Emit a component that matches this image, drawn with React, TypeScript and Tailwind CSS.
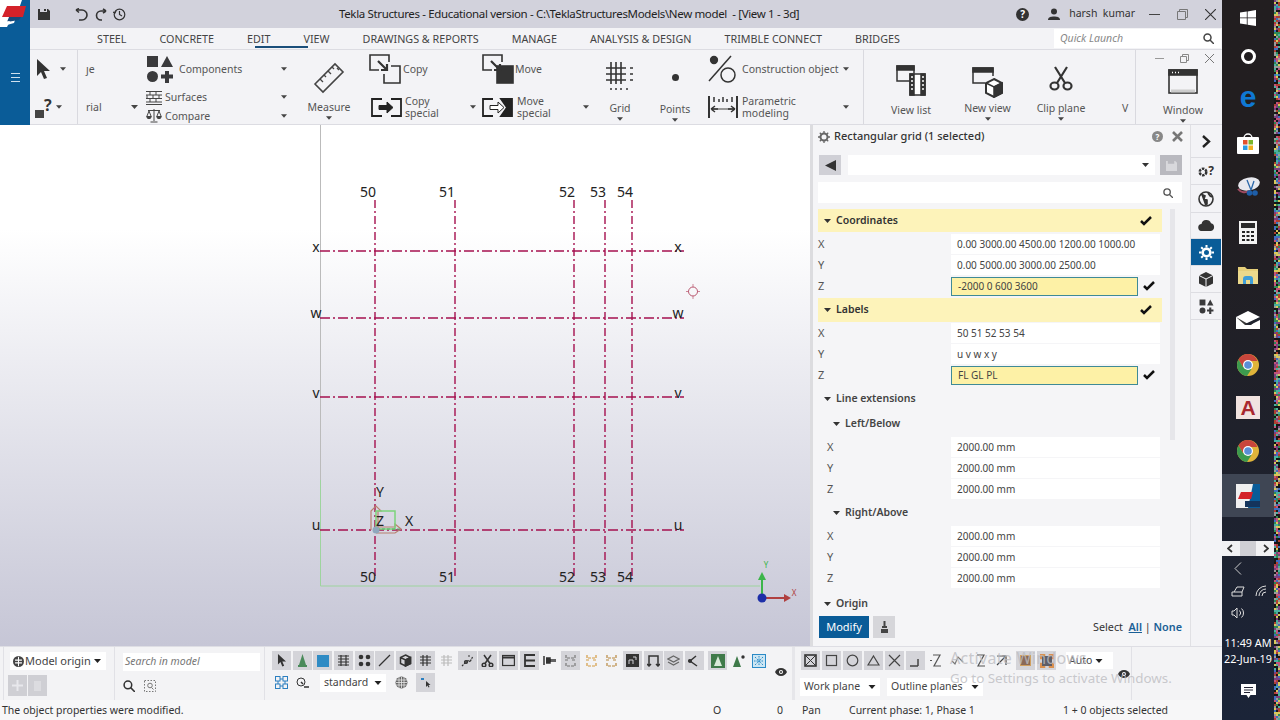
import React from "react";

const ink = "#3a3a3c";
const Caret = ({ c = "#444", w = 7 }: { c?: string; w?: number }) => (
  <svg width={w} height={4} viewBox="0 0 7 4" className="shrink-0"><path d="M0 0h7L3.5 4z" fill={c} /></svg>
);

function Components({ s = 28 }: { s?: number }) {
  return (
    <svg width={s} height={s} viewBox="0 0 28 28" fill={ink}>
      <rect x="1" y="1" width="11" height="11" />
      <path d="M15 12 21 1l6 11z" />
      <circle cx="6.5" cy="21.5" r="5.5" />
      <path d="M19 16h4v3.500h4v4h-4V28h-4v-4.500h-4v-4h4z" />
    </svg>
  );
}
const Surfaces = () => (
  <svg width="16" height="15" viewBox="0 0 16 15" stroke="#444" fill="none" strokeWidth="1">
    <path d="M0 1.500h16M0 5h16M0 8.500h16M0 12h16M0 14.500h16M4 1.500V5M10 1.500V5M1 5v3.500M7 5v3.500M13 5v3.500M4 8.500V12M10 8.500V12" />
  </svg>
);
const Compare = () => (
  <svg width="16" height="15" viewBox="0 0 16 15" stroke="#444" fill="none" strokeWidth="1">
    <path d="M8 1v12M2 2.500h12M3 3 .8 8.500h4.400zM13 3l-2.200 5.500h4.400zM4.500 14h7" />
    <path d="M.8 8.500a2.200 2.200 0 0 0 4.400 0zM10.800 8.500a2.200 2.200 0 0 0 4.400 0z" fill="#444" />
  </svg>
);
const Ruler = () => (
  <svg width="32" height="32" viewBox="0 0 32 32" fill="none" stroke="#444" strokeWidth="1.600">
    <path d="M2 22 22 2l8 8-20 20z" />
    <path d="M7 17l3 3M11 13l2 2M15 9l3 3M19 5l2 2M24 6l2 2" strokeWidth="1.300" />
  </svg>
);
const CopyIcon = ({ filled }: { filled?: boolean }) => (
  <svg width="32" height="30" viewBox="0 0 32 30" fill="none" stroke="#333" strokeWidth="1.600">
    <path d="M20 8V1H1v15h9" />
    {filled ? <rect x="15" y="12" width="16" height="17" fill="#333" /> : <path d="M22 12h9v17H15v-9" />}
    <path d="M9 7l9 9M18 10v6h-6" strokeWidth="2.200" stroke="#333" />
  </svg>
);
const SpecialIcon = ({ filled }: { filled?: boolean }) => (
  <svg width="31" height="19" viewBox="0 0 31 19" fill="none" stroke="#222" strokeWidth="1.800">
    <path d="M11 1H1v17h10" />
    {filled ? <path d="M19 1h11v17H19l6-8.500z" fill="#222" /> : <path d="M20 1h10v17H20" />}
    <path d="M8 7.500h8V4l6 5.500-6 5.500v-3.500H8z" fill={filled ? "#fff" : "#222"} strokeWidth="1" />
  </svg>
);
const GridIcon = () => (
  <svg width="28" height="28" viewBox="0 0 28 28" stroke="#333" fill="none" strokeWidth="1.600">
    <path d="M0 6h20M0 12h20M0 18h20M5 0v22M10 0v22M15 0v22" />
    <path d="M24 6h3M24 12h3M24 18h3M5 26v2M10 26v2M15 26v2M21 26v2" strokeWidth="1.500" />
  </svg>
);
const Construction = () => (
  <svg width="30" height="28" viewBox="0 0 30 28" fill="none" stroke="#333" strokeWidth="1.500">
    <circle cx="6" cy="5" r="3.400" fill="#333" />
    <circle cx="20" cy="20" r="7" />
    <path d="M1 26 23 1" />
  </svg>
);
const Parametric = () => (
  <svg width="30" height="24" viewBox="0 0 30 24" fill="none" stroke="#333" strokeWidth="1.500">
    <path d="M1 1v22M29 1v22" strokeWidth="2" />
    <path d="M6 2v5M11 4v3M15 2v5M19 4v3M24 2v5" />
    <path d="M4 14h22" stroke="#999" strokeWidth="2" />
    <path d="M3 14h7M20 14h7M3 14l4-3M3 14l4 3M27 14l-4-3M27 14l-4 3" />
  </svg>
);
const WinGlyph = ({ w = 30, h = 25 }: { w?: number; h?: number }) => (
  <svg width={w} height={h} viewBox="0 0 30 25" fill="none" stroke="#333" strokeWidth="1.600">
    <rect x="1" y="1" width="28" height="23" />
    <rect x="1" y="1" width="28" height="5" fill="#333" />
    <path d="M4 3.500h1M7 3.500h1M10 3.500h1" stroke="#fff" />
    <path d="M3 22h24" stroke="#ccc" strokeWidth="3" />
  </svg>
);
const ViewList = () => (
  <svg width="30" height="31" viewBox="0 0 30 31" fill="none" stroke="#333" strokeWidth="1.500">
    <path d="M17 16H1V1h17v7" />
    <rect x="1" y="1" width="17" height="4" fill="#333" />
    <rect x="14" y="9" width="15" height="21" fill="#fff" />
    <rect x="14" y="9" width="4" height="21" fill="#333" />
    <rect x="25" y="9" width="4" height="21" fill="#333" />
    <path d="M15 12h2M15 16h2M15 20h2M15 24h2M26 12h2M26 16h2M26 20h2M26 24h2" stroke="#fff" />
  </svg>
);
const NewView = () => (
  <svg width="31" height="31" viewBox="0 0 31 31" fill="none" stroke="#333" strokeWidth="1.500">
    <path d="M13 16H1V1h20v8" />
    <rect x="1" y="1" width="20" height="4" fill="#333" />
    <path d="M22 12l8 4v10l-8 4-8-4V16z" fill="#fff" strokeWidth="2" />
    <path d="M14 16l8 4 8-4" strokeWidth="1.500" />
    <path d="M22 20v10l8-4V16z" fill="#333" />
  </svg>
);
const Scissors = () => (
  <svg width="24" height="25" viewBox="0 0 24 25" fill="none" stroke="#333" strokeWidth="2.200">
    <ellipse cx="5.500" cy="20" rx="4" ry="3.500" />
    <ellipse cx="18.500" cy="20" rx="4" ry="3.500" />
    <path d="M8 17 18 1M16 17 6 1" />
  </svg>
);

const RibbonLabel = ({ children }: { children: React.ReactNode }) => <span className="block text-[#555] text-[10.5px] leading-[12px] whitespace-nowrap">{children}</span>;

function Ribbon() {
  return (
    <div className="flex h-[75px] border-b border-[#dcdce2] bg-[#f3f3f6]">
      <div className="w-[48px] border-r border-[#d9d9df] shrink-0">
        <div className="h-[38px] flex items-center pl-[6px] gap-[9px]">
          <svg width="15" height="21" viewBox="0 0 15 21"><path d="M1 0v17l4-4 3 7 3-1-3-7h6z" fill="#333" /></svg>
          <Caret w={6} />
        </div>
        <div className="h-[38px] flex items-center pl-[5px] gap-[1px]">
          <div className="flex items-end">
            <span className="w-[9px] h-[8px] bg-[#444] mb-[1px]" />
            <span className="text-[#333] text-[16px] font-bold leading-[18px] mb-[5px]">?</span>
          </div>
          <span className="ml-[3px]"><Caret w={6} /></span>
        </div>
      </div>
      <div className="w-[62px] shrink-0 pl-[8px]">
        <div className="h-[38px] flex items-center"><RibbonLabel>ȷe</RibbonLabel></div>
        <div className="h-[38px] flex items-center justify-between pr-[2px]"><RibbonLabel>rial</RibbonLabel><Caret /></div>
      </div>
      <div className="w-[155px] shrink-0 pl-[6px] pr-[8px]">
        <div className="h-[38px] flex items-center justify-between">
          <div className="flex items-center gap-[5px] mt-[-1px]"><Components /><RibbonLabel>Components</RibbonLabel></div><Caret w={6} />
        </div>
        <div className="h-[18.500px] flex items-center justify-between"><div className="flex items-center gap-[3px]"><Surfaces /><RibbonLabel>Surfaces</RibbonLabel></div><Caret w={6} /></div>
        <div className="h-[18.500px] flex items-center justify-between"><div className="flex items-center gap-[3px]"><Compare /><RibbonLabel>Compare</RibbonLabel></div><Caret w={6} /></div>
      </div>
      <div className="w-[65px] shrink-0 flex flex-col items-center pl-[3px]">
        <div className="h-[44px] flex items-end"><Ruler /></div>
        <div className="mt-[7px]"><RibbonLabel>Measure</RibbonLabel></div>
        <div className="mt-[3px]"><Caret w={6} /></div>
      </div>
      <div className="w-[120px] shrink-0 pl-[9px]">
        <div className="h-[38px] flex items-center gap-[2px]"><CopyIcon /><RibbonLabel>Copy</RibbonLabel></div>
        <div className="h-[38px] flex items-center">
          <span className="ml-[2px]"><SpecialIcon /></span>
          <span className="ml-[3px] w-[65px] flex"><RibbonLabel>Copy<br />special</RibbonLabel></span>
          <Caret w={6} />
        </div>
      </div>
      <div className="w-[115px] shrink-0 pl-[2px]">
        <div className="h-[38px] flex items-center gap-[1px]"><CopyIcon filled /><RibbonLabel>Move</RibbonLabel></div>
        <div className="h-[38px] flex items-center">
          <SpecialIcon filled />
          <span className="ml-[4px] w-[66px] flex"><RibbonLabel>Move<br />special</RibbonLabel></span>
          <Caret w={6} />
        </div>
      </div>
      <div className="w-[53px] shrink-0 flex flex-col items-center pr-[3px]">
        <div className="h-[40px] flex items-end"><GridIcon /></div>
        <div className="mt-[12px]"><RibbonLabel>Grid</RibbonLabel></div>
        <div className="mt-[3px]"><Caret w={6} /></div>
      </div>
      <div className="w-[52px] shrink-0 flex flex-col items-center pl-[2px]">
        <div className="h-[31px] flex items-end"><span className="w-[7px] h-[7px] rounded-full bg-[#333]" /></div>
        <div className="mt-[22px]"><RibbonLabel>Points</RibbonLabel></div>
        <div className="mt-[3px]"><Caret w={6} /></div>
      </div>
      <div className="w-[164px] shrink-0 pl-[8px] pr-[14px] border-r border-[#d9d9df]">
        <div className="h-[38px] flex items-center justify-between">
          <div className="flex items-center gap-[4px]"><Construction /><RibbonLabel>Construction object</RibbonLabel></div><Caret w={6} />
        </div>
        <div className="h-[38px] flex items-center justify-between">
          <div className="flex items-center gap-[4px]"><Parametric /><RibbonLabel>Parametric<br />modeling</RibbonLabel></div><Caret w={6} />
        </div>
      </div>
      <div className="w-[272px] shrink-0 flex border-r border-[#d9d9df]">
        <div className="w-[90px] flex flex-col items-center pl-[4px]">
          <div className="h-[46px] flex items-end"><ViewList /></div>
          <div className="mt-[8px]"><RibbonLabel>View list</RibbonLabel></div>
        </div>
        <div className="w-[75px] flex flex-col items-center pr-[8px]">
          <div className="h-[48px] flex items-end"><NewView /></div>
          <div className="mt-[4px]"><RibbonLabel>New view</RibbonLabel></div>
          <div className="mt-[3px]"><Caret w={6} /></div>
        </div>
        <div className="w-[72px] flex flex-col items-center pr-[8px]">
          <div className="h-[41px] flex items-end"><Scissors /></div>
          <div className="mt-[11px]"><RibbonLabel>Clip plane</RibbonLabel></div>
          <div className="mt-[3px]"><Caret w={6} /></div>
        </div>
        <div className="pt-[52px] pl-[21px]"><RibbonLabel>V</RibbonLabel></div>
      </div>
      <div className="w-[85px] shrink-0 flex flex-col">
        <div className="h-[15px] flex items-center justify-end gap-[16px] pr-[7px] pt-[2px]">
          <span className="w-[9px] h-px bg-[#999]" />
          <svg width="9" height="9" viewBox="0 0 9 9" fill="none" stroke="#888"><path d="M.5 2.500h6v6h-6zM2.500 2.500v-2h6v6h-2" /></svg>
          <svg width="9" height="9" viewBox="0 0 9 9" stroke="#777"><path d="M0 0l9 9M9 0 0 9" /></svg>
        </div>
        <div className="flex flex-col items-center pl-[9px] mt-[4px]">
          <WinGlyph />
          <div className="mt-[10px]"><RibbonLabel>Window</RibbonLabel></div>
          <div className="mt-[3px]"><Caret w={6} /></div>
        </div>
      </div>
    </div>
  );
}

function TitleBar() {
  return (
    <div className="h-[28px] bg-[#d2d2dc] flex items-center relative">
      <svg className="ml-[8px]" width="12" height="12" viewBox="0 0 12 12"><path d="M0 1h2v3h7V1h1l2 2v9H0z" fill="#333" /><rect x="6" y="1" width="2" height="2" fill="#333" /></svg>
      <svg className="ml-[25px]" width="13" height="13" viewBox="0 0 13 13" fill="none" stroke="#333" strokeWidth="1.600"><path d="M1 2h6a4.500 4.500 0 0 1 0 10H4" /><path d="M1 2l3-1.500M1 2l3 2.500" /></svg>
      <svg className="ml-[6px]" width="13" height="13" viewBox="0 0 13 13" fill="none" stroke="#333" strokeWidth="1.600"><path d="M12 3H7a4.500 4.500 0 0 0 0 9h1" /><path d="M12 3 9 .8M12 3 9 5" /></svg>
      <svg className="ml-[6px]" width="13" height="13" viewBox="0 0 13 13" fill="none" stroke="#333" strokeWidth="1.200"><circle cx="6.500" cy="6.500" r="5.300" /><path d="M6.500 3v3.500l2.500 1.500" /><path d="M0 4l2 1 1-2" /></svg>
      <span className="ml-[213px] text-[11.500px] tracking-[-0.35px] text-[#222] whitespace-pre w-[470px]">Tekla Structures - Educational version - C:\TeklaStructuresModels\New model  - [View 1 - 3d]</span>
      <div className="ml-auto flex items-center pr-[6px]">
        <span className="w-[13px] h-[13px] rounded-full bg-[#333] text-white text-[10px] font-bold leading-[13px] text-center">?</span>
        <svg className="ml-[19px]" width="12" height="12" viewBox="0 0 12 12" fill="#333"><circle cx="6" cy="3.500" r="3" /><path d="M0 12c0-3 3-3.500 6-3.500s6 .5 6 3.500z" /></svg>
        <span className="ml-[9px] text-[10.500px] text-[#333] whitespace-pre">harsh  kumar</span>
        <span className="ml-[14px] w-[11px] h-px bg-[#444]" />
        <svg className="ml-[17px]" width="11" height="11" viewBox="0 0 11 11" fill="none" stroke="#777"><path d="M.5 2.500h8v8h-8zM2.500 2.500v-2h8v8h-2" /></svg>
        <svg className="ml-[17px]" width="11" height="11" viewBox="0 0 11 11" stroke="#333" strokeWidth="1.100"><path d="M0 0l11 11M11 0 0 11" /></svg>
      </div>
    </div>
  );
}

function Tabs() {
  const tabs = ["STEEL", "CONCRETE", "EDIT", "VIEW", "DRAWINGS & REPORTS", "MANAGE", "ANALYSIS & DESIGN", "TRIMBLE CONNECT", "BRIDGES"];
  return (
    <div className="h-[22px] bg-[#f3f3f6] flex items-center border-b border-[#dcdce2] pl-[67px] relative">
      <div className="flex gap-[33px] text-[10.750px] pt-[1px] text-[#444] whitespace-nowrap">
        {tabs.map((t) => <span key={t}>{t}</span>)}
      </div>
      <span className="absolute left-[225px] bottom-[1px] w-[53px] h-[2px] bg-[#1a4e7a]" />
      <div className="ml-auto mr-[1px] w-[167px] h-[19px] bg-white flex items-center justify-between pl-[6px] pr-[7px]">
        <span className="italic text-[10.500px] text-[#888]">Quick Launch</span>
        <svg width="11" height="11" viewBox="0 0 11 11" fill="none" stroke="#444" strokeWidth="1.500"><circle cx="4.500" cy="4.500" r="3.500" /><path d="M7 7l4 4" /></svg>
      </div>
    </div>
  );
}

function Viewport() {
  const vx: [number, string, number][] = [[375, "50", 368], [455, "51", 447], [574, "52", 567], [605, "53", 598], [632, "54", 625]];
  const hy: [number, string, number][] = [[251, "x", 247], [318, "w", 313], [397, "v", 393], [530, "u", 525]];
  return (
    <div className="w-[810px] h-full shrink-0 bg-gradient-to-b from-white from-[20%] to-[#c6c6d6]">
      <svg width="810" height="521" viewBox="0 125 810 521" fontFamily="'Noto Sans', sans-serif">
        <path d="M320.500 125v355" stroke="#bbb" />
        <path d="M320.500 480v106H760" stroke="#9ed49e" fill="none" />
        {vx.map(([x]) => <path key={x} d={`M${x} 200V578`} stroke="#a5104f" strokeWidth="1.400" strokeDasharray="8 3 2 3" />)}
        {hy.map(([y]) => <path key={y} d={`M320 ${y}H684`} stroke="#a5104f" strokeWidth="1.400" strokeDasharray="10 3 2 3" />)}
        {vx.map(([, l, x]) => (
          <g key={l} fontSize="14" fill="#222" textAnchor="middle">
            <text x={x} y="197">{l}</text>
            <text x={x} y="582">{l}</text>
          </g>
        ))}
        {hy.map(([, l, y]) => (
          <g key={l} fontSize="14" fill="#222" textAnchor="middle">
            <text x="316" y={y + 5}>{l}</text>
            <text x="678" y={y + 5}>{l}</text>
          </g>
        ))}
        <g fill="none" strokeWidth="1.200">
          <path d="M371 530v-19l5-5 5 5h-3v19" stroke="#b8806e" />
          <path d="M376 533h19l6-4-6-5v3h-19" stroke="#b8806e" />
          <rect x="376" y="511" width="19" height="18" stroke="#7bd47b" strokeWidth="1.500" />
          <path d="M377 529h24" stroke="#59b36a" strokeDasharray="3 2" />
          <circle cx="376" cy="530" r="3.500" fill="#8fa7bd" stroke="none" />
        </g>
        <g fill="#222" fontSize="14" textAnchor="middle">
          <text x="380" y="497">Y</text>
          <text x="409" y="526">X</text>
          <text x="380" y="526">Z</text>
        </g>
        <circle cx="693" cy="291.500" r="4.500" fill="none" stroke="#b9566e" />
        <path d="M693 284v3M693 296v3M686 291.500h3M697 291.500h3" stroke="#b9566e" strokeWidth=".7" />
        <path d="M762 598V576" stroke="#3cb54a" strokeWidth="2" />
        <path d="M758 580l4-8 4 8z" fill="#3cb54a" />
        <path d="M762 598H786" stroke="#b04040" strokeWidth="2" />
        <path d="M784 594l7 4-7 4z" fill="#b04040" />
        <circle cx="762" cy="598" r="4.500" fill="#1d2fa8" />
        <text x="766" y="568" fontSize="8" fill="#3cb54a" textAnchor="middle">Y</text>
        <text x="794" y="596" fontSize="8" fill="#b04040" textAnchor="middle">X</text>
      </svg>
    </div>
  );
}

const Check = () => (
  <svg width="12" height="10" viewBox="0 0 12 10" fill="none" stroke="#111" strokeWidth="2.500"><path d="M1 5l3 3 7-7" /></svg>
);
const Field = ({ label, value, edit, near }: { label: string; value: string; edit?: boolean; near?: boolean }) => (
  <div className="h-[20px] flex items-center mt-[1px] text-[10px]">
    <span className={`w-[133px] text-[#555] text-[11px] ${near ? "pl-[0px]" : "pl-[9px]"}`}>{label}</span>
    {edit ? (
      <>
        <div className="w-[187px] h-[19px] bg-[#fdf1a6] border border-[#3f8a96] flex items-center pl-[6px] text-[#444]">{value}</div>
        <span className="ml-[5px]"><Check /></span>
      </>
    ) : (
      <div className="w-[209px] h-[20px] bg-white flex items-center pl-[6px] text-[#444]">{value}</div>
    )}
  </div>
);
const Section = ({ label, cls }: { label: string; cls: string }) => (
  <div className={`h-[23px] bg-[#fdf3ba] flex items-center pl-[5px] pr-[10px] text-[#333] text-[10.500px] font-semibold ${cls}`}>
    <Caret w={9} c="#333" />
    <span className="ml-[4px]">{label}</span>
    <span className="ml-auto"><Check /></span>
  </div>
);
const Sub = ({ label, cls, indent }: { label: string; cls: string; indent?: boolean }) => (
  <div className={`h-[20px] flex items-center text-[10.500px] font-semibold text-[#444] ${indent ? "pl-[14px]" : "pl-[5px]"} ${cls}`}>
    <Caret w={9} c="#333" />
    <span className="ml-[4px]">{label}</span>
  </div>
);

function Panel() {
  return (
    <div className="w-[380px] shrink-0 h-full bg-[#f5f5f7] border-l-[3px] border-[#dcdcdf] pl-[5px] flex flex-col">
      <div className="h-[23px] flex items-center pr-[7px]">
        <svg width="12" height="12" viewBox="0 0 12 12" fill="none" stroke="#666" strokeWidth="2"><circle cx="6" cy="6" r="3.500" /><path d="M6 0v2M6 10v2M0 6h2M10 6h2M1.800 1.800l1.400 1.400M8.800 8.800l1.400 1.400M1.800 10.200l1.400-1.400M8.800 3.200l1.400-1.400" strokeWidth="1.300" /></svg>
        <span className="ml-[4px] text-[11px] font-medium text-[#333]">Rectangular grid (1 selected)</span>
        <span className="ml-auto w-[11px] h-[11px] rounded-full bg-[#888] text-white text-[8px] font-bold text-center leading-[11px]">?</span>
        <svg className="ml-[9px]" width="11" height="11" viewBox="0 0 11 11" stroke="#777" strokeWidth="2.600"><path d="M1 1l9 9M10 1 1 10" /></svg>
      </div>
      <div className="mt-[7px] h-[20px] flex pr-[7px]">
        <div className="ml-[1px] w-[22px] bg-[#d0d0d6] flex items-center justify-center">
          <svg width="11" height="11" viewBox="0 0 11 11"><path d="M11 0v11L0 5.500z" fill="#333" /></svg>
        </div>
        <div className="ml-[7px] w-[307px] bg-white flex items-center justify-end pr-[5px]"><Caret w={9} c="#333" /></div>
        <div className="ml-[5px] w-[22px] bg-[#b9b9bf] flex items-center justify-center">
          <svg width="11" height="11" viewBox="0 0 12 12"><path d="M0 1h2v3h7V1h1l2 2v9H0z" fill="#d8d8dc" /></svg>
        </div>
      </div>
      <div className="mt-[7px] h-[21px] w-[364px] bg-white flex items-center justify-end pr-[9px]">
        <svg width="10" height="10" viewBox="0 0 11 11" fill="none" stroke="#555" strokeWidth="1.500"><circle cx="4.500" cy="4.500" r="3.500" /><path d="M7 7l4 4" /></svg>
      </div>
      <div className="flex flex-1 min-h-0">
        <div className="w-[344px] shrink-0">
          <Section label="Coordinates" cls="mt-[6px]" />
          <div className="mt-[2px]">
            <Field near label="X" value="0.00 3000.00 4500.00 1200.00 1000.00" />
            <Field near label="Y" value="0.00 5000.00 3000.00 2500.00" />
            <Field near label="Z" value="-2000 0 600 3600" edit />
          </div>
          <Section label="Labels" cls="mt-[2px] h-[24px]" />
          <div className="mt-[1px]">
            <Field near label="X" value="50 51 52 53 54" />
            <Field near label="Y" value="u v w x y" />
            <Field near label="Z" value="FL GL PL" edit />
          </div>
          <Sub label="Line extensions" cls="mt-[4px]" />
          <Sub label="Left/Below" cls="mt-[5px]" indent />
          <div className="mt-[3px]">
            <Field label="X" value="2000.00 mm" />
            <Field label="Y" value="2000.00 mm" />
            <Field label="Z" value="2000.00 mm" />
          </div>
          <Sub label="Right/Above" cls="mt-[4px]" indent />
          <div className="mt-[3px]">
            <Field label="X" value="2000.00 mm" />
            <Field label="Y" value="2000.00 mm" />
            <Field label="Z" value="2000.00 mm" />
          </div>
          <Sub label="Origin" cls="mt-[6px]" />
          <div className="mt-[2px] flex items-center h-[22px] w-[364px]">
            <button className="ml-[1px] w-[50px] h-[22px] bg-[#0a5c98] text-white text-[11px]">Modify</button>
            <span className="ml-[4px] w-[22px] h-[22px] bg-[#d6d6da] flex items-center justify-center">
              <svg width="7" height="12" viewBox="0 0 7 12" fill="#444"><rect x="2.500" y="0" width="2" height="5" /><path d="M1 5h5v2H1zM0 8h7v4H0z" /></svg>
            </span>
            <span className="ml-auto text-[10.800px] text-[#333] whitespace-pre">Select  <span className="text-[#1a5f96] underline font-semibold">All</span> | <span className="text-[#1a5f96] font-semibold">None</span></span>
          </div>
        </div>
        <div className="ml-[8px] mt-[6px] w-[5px] h-[231px] bg-[#e6e6ea]" />
      </div>
    </div>
  );
}

function SideIcons() {
  const items: [React.ReactNode, boolean, string][] = [
    [<svg width="9" height="13" viewBox="0 0 9 13" fill="none" stroke="#222" strokeWidth="2.400"><path d="M1 1l6 5.500L1 12" /></svg>, false, "h-[33px]"],
    [<div className="flex items-end"><svg className="mb-[2px]" width="10" height="10" viewBox="0 0 10 10" fill="none" stroke="#333"><circle cx="5" cy="5" r="3.300" strokeWidth="2.500" strokeDasharray="2.500 1" /></svg><span className="text-[12px] leading-[16px] font-bold text-[#333]">?</span></div>, false, "h-[27px]"],
    [<svg width="16" height="16" viewBox="0 0 16 16" fill="none" stroke="#333" strokeWidth="1.600"><circle cx="8" cy="8" r="7" /><path d="M3 3l4 2-1 3 3 1 0 4-2 1M10 2l2 3 2 1" fill="#333" /></svg>, false, "h-[28px]"],
    [<svg width="17" height="11" viewBox="0 0 17 11" fill="#333"><path d="M4 11a3.500 3.500 0 0 1-.5-7A5 5 0 0 1 13 3.200 4 4 0 0 1 13 11z" /></svg>, false, "h-[26px]"],
    [<svg width="15" height="15" viewBox="0 0 15 15" fill="none" stroke="#fff" strokeWidth="2.600"><circle cx="7.500" cy="7.500" r="3.800" /><path d="M7.500 0v2.500M7.500 12.500V15M0 7.500h2.500M12.500 7.500H15M2.200 2.200 4 4M11 11l1.800 1.800M2.200 12.800 4 11M11 4l1.800-1.800" strokeWidth="2" /></svg>, true, "h-[27px]"],
    [<svg width="14" height="15" viewBox="0 0 14 15"><path d="M7 0l7 3.500v8L7 15 0 11.500v-8z" fill="#333" /><path d="M0 3.500 7 7l7-3.500M7 7v8" stroke="#f3f3f6" fill="none" /></svg>, false, "h-[27px]"],
    [<Components s={15} />, false, "h-[27px]"],
  ];
  return (
    <div className="w-[32px] shrink-0 h-full bg-[#f3f3f6] border-l border-[#e0e0e4] flex flex-col">
      {items.map(([icon, active, h], i) => (
        <div key={i} className={`${h} w-[30px] flex items-center justify-center border-b border-[#dddde2] ${active ? "bg-[#0a5c98]" : ""}`}>{icon}</div>
      ))}
    </div>
  );
}

const G = ({ children, s = "#333", f = "none", sw = 1.2 }: { children: React.ReactNode; s?: string; f?: string; sw?: number }) => (
  <svg width="13" height="13" viewBox="0 0 13 13" fill={f} stroke={s} strokeWidth={sw}>{children}</svg>
);
const Tile = ({ on = true, children, cls = "" }: { on?: boolean; children: React.ReactNode; cls?: string }) => (
  <div className={`w-[19px] h-[19px] flex items-center justify-center shrink-0 ${on ? "bg-[#d4d4d9]" : ""} ${cls}`}>{children}</div>
);
const Dropdown = ({ label, cls }: { label: string; cls: string }) => (
  <div className={`h-[18px] bg-white flex items-center justify-between px-[4px] text-[10.500px] text-[#444] ${cls}`}>
    <span>{label}</span><Caret w={8} c="#222" />
  </div>
);
const Eye = () => (
  <svg width="12" height="8" viewBox="0 0 12 8" fill="#333"><path d="M6 0c3 0 5 2 6 4-1 2-3 4-6 4S1 6 0 4c1-2 3-4 6-4z" /><circle cx="6" cy="4" r="2" fill="#fff" /><circle cx="6" cy="4" r="1" /></svg>
);
const hatch = <path d="M1 3h11M1 6h11M1 9h11M4 1v11M8 1v11" />;

function Toolbar() {
  const row1: [React.ReactNode, boolean, string?][] = [
    [<svg width="10" height="13" viewBox="0 0 15 21"><path d="M1 0v17l4-4 3 7 3-1-3-7h6z" fill="#333" /></svg>, true],
    [<svg width="9" height="13" viewBox="0 0 9 13" fill="#4a8a5a"><path d="M4.500 0 8 11H1z" /><rect x="0" y="11" width="9" height="2" /></svg>, true],
    [<span className="w-[12px] h-[12px] bg-[#2f8bc4] block" />, true],
    [<G><path d="M1 2h11M1 5h11M1 8h11M1 11h11M4 1v11M9 1v11" /></G>, true],
    [<G f="#333" s="none"><circle cx="3" cy="3" r="2.300" /><circle cx="10" cy="3" r="2.300" /><circle cx="3" cy="10" r="2.300" /><circle cx="10" cy="10" r="2.300" /></G>, true],
    [<G><path d="M1 12 12 1" /></G>, true],
    [<G sw={1.500}><path d="M6.500 1l5 2.500v6l-5 2.500-5-2.500v-6zM1.500 3.500l5 2.500 5-2.500M6.500 6v6" /><path d="M6.500 6v6l5-2.500v-6z" fill="#333" /></G>, true],
    [<G>{hatch}</G>, true],
    [<G s="#bbb">{hatch}</G>, false],
    [<G><path d="M1 12 7 6l2 2 3-6M7 2h3" strokeDasharray="2 1" /><circle cx="5" cy="8" r="1.500" fill="#555" /></G>, true],
    [<G sw={1.500}><circle cx="3" cy="11" r="1.800" /><circle cx="10" cy="11" r="1.800" /><path d="M4 9.500 10 1M9 9.500 3 1" /></G>, true],
    [<G><rect x=".6" y="1.500" width="11.800" height="10" /><path d="M1 3.500h11" strokeWidth="2" /></G>, true],
    [<G sw={1.800}><path d="M2 0v13M12 1H2M12 6.500H2M12 12H2" /></G>, true],
    [<G sw={1.500}><path d="M1 2v9M3 4h4v5H3M8 5v3M10 5v3M12 5v3" fill="#333" /></G>, false],
    [<G s="#777"><path d="M2 1v3h9V1M1 6h4M8 6h4M2 9v3h9V9" strokeDasharray="3 1" /></G>, true],
    [<G s="#d49b42"><path d="M2 1v3h9V1M1 6h4M8 6h4M2 9v3h9V9" strokeDasharray="3 1" /></G>, false],
    [<G s="#b8873e"><path d="M2 1v3h9V1M1 6h4M8 6h4M2 9v3h9V9" strokeDasharray="3 1" /></G>, false],
    [<svg width="13" height="13" viewBox="0 0 13 13" fill="#333"><path d="M0 0h13v13H0z" /><path d="M3 10V6h4v4M7 3h3v3" stroke="#d4d4d9" fill="none" /></svg>, true],
    [<G sw={1.500}><path d="M2 12V2h9v10M0 10l2 2 2-2M9 10l2 2 2-2" /></G>, true],
    [<G s="#666"><path d="M6.500 2 12 5 6.500 8 1 5zM1 8l5.500 3L12 8" /></G>, true],
    [<G sw={1.500}><path d="M2 7l6-5M2 7l7 5" /><circle cx="2" cy="7" r="1.300" fill="#333" /></G>, true],
    [<svg width="14" height="14" viewBox="0 0 14 14"><rect width="14" height="14" fill="#3f7a4a" /><path d="M7 2 11 12H3z" fill="#d9ead9" /></svg>, true, "ml-[3px]"],
    [<svg width="14" height="14" viewBox="0 0 14 14" fill="#3f7a4a"><path d="M5 2 9 13H1z" /><circle cx="11" cy="3" r="1.700" fill="#333" /></svg>, false],
    [<svg width="14" height="14" viewBox="0 0 14 14" fill="none" stroke="#2b8ac6"><rect x=".5" y=".5" width="13" height="13" fill="#cde6f3" /><path d="M3 3l8 8M11 3l-8 8M7 2v10M2 7h10" strokeDasharray="1.500 1" /></svg>, false],
  ];
  const right: [React.ReactNode, boolean, string?][] = [
    [<G sw={1.600}><rect x="1" y="1" width="11" height="11" /><path d="M1 1l11 11M12 1 1 12" strokeWidth="1" /></G>, true],
    [<G s="#444"><rect x="1.500" y="1.500" width="10" height="10" /></G>, true],
    [<G s="#444"><circle cx="6.500" cy="6.500" r="5.300" /></G>, true],
    [<G s="#444"><path d="M6.500 2 12 11H1z" /></G>, true],
    [<G s="#444"><path d="M1 1l11 11M12 1 1 12" /></G>, true],
    [<G s="#444" sw={1.500}><path d="M1 12h8M9 12V5" /></G>, true],
    [<G s="#555"><path d="M3 1h7L4 12h7M0 6.500h2" /></G>, false],
    [<G s="#777"><path d="M1 7l3 3 3-7 5 5" /></G>, false],
    [<G s="#555"><path d="M3 1h7L4 12h7" /></G>, false, "ml-[2px]"],
    [<G s="#444"><path d="M2 2h9v9M11 2 2 11" /></G>, false],
    [<span className="w-[11px] h-[11px] bg-[#8a6a58] border border-[#d0a060] block" />, true, "ml-[3px]"],
    [<span className="w-[10px] h-[10px] bg-[#5e5e68] outline-2 outline-dashed outline-[#d99050] block" />, true],
  ];
  return (
    <div className="h-[54px] bg-[#f3f3f5] border-t border-[#dedee4] flex relative">
      <div className="w-[112px] ml-[3px] shrink-0 border-l border-r border-[#e1e1e6] pl-[6px] pt-[5px]">
        <div className="w-[96px] h-[18px] bg-white flex items-center pl-[3px] pr-[4px] text-[11px] text-[#444]">
          <svg width="11" height="11" viewBox="0 0 16 16" fill="#444"><circle cx="8" cy="8" r="8" /><path d="M3 6h10M3 10h10M8 1v14" stroke="#fff" strokeWidth="1.500" /></svg>
          <span className="ml-[1px] mr-auto">Model origin</span><Caret w={9} c="#222" />
        </div>
        <div className="mt-[5px] flex gap-[1px] ml-[-2px]">
          <div className="w-[19px] h-[21px] bg-[#cfcfd4] flex items-center justify-center"><svg width="11" height="11" viewBox="0 0 11 11" stroke="#e8e8ec" strokeWidth="2"><path d="M5.500 0v11M0 5.500h11" /></svg></div>
          <div className="w-[19px] h-[21px] bg-[#cfcfd4] flex items-center justify-center"><span className="w-[7px] h-[10px] bg-[#dcdce0]" /></div>
        </div>
      </div>
      <div className="w-[150px] shrink-0 border-r border-[#e1e1e6] pl-[8px] pt-[6px]">
        <div className="w-[137px] h-[18px] bg-white flex items-center pl-[2px] italic text-[10.500px] text-[#777]">Search in model</div>
        <div className="mt-[9px] flex items-center">
          <svg width="12" height="12" viewBox="0 0 11 11" fill="none" stroke="#333" strokeWidth="1.400"><circle cx="4.500" cy="4.500" r="3.500" /><path d="M7 7l4 4" /></svg>
          <svg className="ml-[9px]" width="12" height="12" viewBox="0 0 12 12" fill="none" stroke="#777"><path d="M.5.500h11v11H.5z" strokeDasharray="1.500 1.500" /><circle cx="6" cy="5.500" r="2.300" /><path d="M7.500 7.500l2 2" /></svg>
        </div>
      </div>
      <div className="w-[530px] shrink-0 border-r-[3px] border-[#e6e6ea] pl-[7px] pt-[4px] relative">
        <div className="flex gap-[1.650px]">
          {row1.map(([icon, on, cls], i) => <Tile key={i} on={on} cls={cls}>{icon}</Tile>)}
        </div>
        <div className="flex items-center mt-[3px]">
          <Tile on={false}><svg width="13" height="13" viewBox="0 0 13 13" fill="none" stroke="#2b7fc0"><rect x=".5" y=".5" width="4.500" height="4.500" /><rect x="8" y=".5" width="4.500" height="4.500" /><rect x=".5" y="8" width="4.500" height="4.500" /><rect x="8" y="8" width="4.500" height="4.500" /><path d="M5 3h3M5 10h3M3 5v3M10 5v3" /></svg></Tile>
          <span className="ml-[2px]"><Tile on={false}><svg width="13" height="12" viewBox="0 0 13 12" fill="none" stroke="#333"><circle cx="5" cy="5" r="4" /><path d="M5 5l2 2M8 10h5" strokeWidth="1.500" /></svg></Tile></span>
          <Dropdown label="standard" cls="ml-[8px] w-[66px]" />
          <span className="ml-[6px]"><Tile on={false}><svg width="13" height="13" viewBox="0 0 13 13" fill="#666"><circle cx="6.500" cy="6.500" r="6" /><path d="M1 4h11M1 6.500h11M1 9h11M4 1v11M6.500 1v11M9 1v11" stroke="#e8e8e8" strokeWidth=".8" /></svg></Tile></span>
          <span className="ml-[5px]"><Tile><svg width="10" height="10" viewBox="0 0 10 10"><rect x="0" y="0" width="3" height="2" fill="#2b7fc0" /><path d="M5 3v6l1.500-1.500 1 2 1-.5-1-2h2z" fill="#333" /></svg></Tile></span>
        </div>
        <div className="absolute left-[510px] top-[21px]"><Eye /></div>
      </div>
      <div className="w-[337px] shrink-0 border-r border-[#e1e1e6] pl-[6px] pt-[4px] relative">
        <div className="flex items-center gap-[2px]">
          {right.map(([icon, on, cls], i) => <Tile key={i} on={on} cls={cls}>{icon}</Tile>)}
          <div className="ml-[8px] w-[47px] h-[17px] bg-white flex items-center px-[3px] gap-[3px] text-[10.500px] text-[#444]"><span>Auto</span><Caret w={8} c="#222" /></div>
        </div>
        <div className="flex mt-[8px] gap-[7px] ml-[-1px]">
          <Dropdown label="Work plane" cls="w-[80px]" />
          <Dropdown label="Outline planes" cls="w-[96px]" />
        </div>
        <div className="absolute left-[323px] top-[23px]"><Eye /></div>
      </div>
      <div className="absolute left-[950px] top-[0px] leading-[20px] text-[#bcbcc1]/80 pointer-events-none whitespace-nowrap">
        <div className="text-[16px] pt-[1px] tracking-[0.3px]">Activate Windows</div>
        <div className="text-[13.400px]">Go to Settings to activate Windows.</div>
      </div>
    </div>
  );
}

function Status() {
  return (
    <div className="h-[20px] bg-[#f7f7f8] flex items-center pl-[2px] pt-[1px] text-[10.500px] text-[#333] whitespace-nowrap">
      <span className="w-[711px]">The object properties were modified.</span>
      <span className="w-[64px]">O</span>
      <span className="w-[25px]">0</span>
      <span className="w-[47px]">Pan</span>
      <span className="w-[214px]">Current phase: 1, Phase 1</span>
      <span>1 + 0 objects selected</span>
    </div>
  );
}

function Logo() {
  return (
    <svg width="30" height="30" viewBox="0 0 30 30" className="block">
      <path d="M0 0h26l-3 10-3 14-20 6z" fill="#ffffff" />
      <path d="M22 0h8v30H0v-3l14-4z" fill="#0a5c98" />
      <path d="M7 6h19l-3 11H2z" fill="#d4222a" />
      <path d="M9 17h12l-2 3-12 2z" fill="#16497a" />
      <path d="M0 22l10-1-3 6H0z" fill="#ffffff" />
    </svg>
  );
}

function Slot({ h, children, cls = "" }: { h: string; children: React.ReactNode; cls?: string }) {
  return <div className={`${h} flex items-center justify-center shrink-0 ${cls}`}>{children}</div>;
}
const Chrome = () => (
  <svg width="22" height="22" viewBox="0 0 22 22">
    <circle cx="11" cy="11" r="11" fill="#e0b43a" />
    <path d="M11 0a11 11 0 0 0-9.500 5.500L6 13l5-6h9.500A11 11 0 0 0 11 0z" fill="#c9463c" />
    <path d="M1.500 5.500A11 11 0 0 0 10 22l4.500-7-8.500-2z" fill="#3c9a4e" />
    <circle cx="11" cy="11" r="5" fill="#fff" />
    <circle cx="11" cy="11" r="3.800" fill="#5a8fd6" />
  </svg>
);

function Taskbar() {
  return (
    <div className="w-[52px] shrink-0 h-full bg-gradient-to-b from-[#221e20] from-[25%] to-[#1b2438] text-white flex flex-col">
      <Slot h="h-[36px]"><svg width="16" height="16" viewBox="0 0 16 16" fill="#fff"><path d="M0 2.500 6.800 1.500v6H0zM7.600 1.400 16 0v7.500H7.600zM0 8.300h6.800v6.200L0 13.500zM7.600 8.300H16V16l-8.400-1.300z" /></svg></Slot>
      <Slot h="h-[40px]"><span className="w-[15px] h-[15px] rounded-full border-[3px] border-white" /></Slot>
      <Slot h="h-[46px]"><span className="text-[30px] font-bold leading-none text-[#0f78d4] font-['Liberation_Sans',sans-serif] mt-[-4px]">e</span></Slot>
      <Slot h="h-[42px]">
        <svg width="22" height="22" viewBox="0 0 22 22"><path d="M7 6a4 4 0 0 1 8 0" fill="none" stroke="#fff" strokeWidth="1.300" /><rect y="5" width="22" height="17" rx="1" fill="#fff" /><rect x="6" y="8" width="4.500" height="4.500" fill="#e2502a" /><rect x="11.500" y="8" width="4.500" height="4.500" fill="#7ab52a" /><rect x="6" y="13.500" width="4.500" height="4.500" fill="#2a9ae2" /><rect x="11.500" y="13.500" width="4.500" height="4.500" fill="#f0b020" /></svg>
      </Slot>
      <Slot h="h-[46px]">
        <svg width="23" height="20" viewBox="0 0 23 20"><ellipse cx="12" cy="7" rx="11" ry="6.500" fill="#e8e8ee" transform="rotate(-12 12 7)" /><path d="M1 12c3 4 8 4 11 2" stroke="#a04a60" strokeWidth="2" fill="none" /><path d="M10 3l4 10M17 4l-3 9" stroke="#2b66a8" strokeWidth="1.300" /><circle cx="12.500" cy="16" r="2.800" fill="#1e5ea8" /><circle cx="18" cy="16" r="2.800" fill="#1e5ea8" /></svg>
      </Slot>
      <Slot h="h-[44px]">
        <svg width="18" height="23" viewBox="0 0 18 23"><rect width="18" height="23" fill="#f2f2f2" /><rect x="2" y="2" width="14" height="5" fill="#2a2a2a" /><g fill="#222"><rect x="3" y="10" width="3" height="2" /><rect x="7.500" y="10" width="3" height="2" /><rect x="12" y="10" width="3" height="2" /><rect x="3" y="14" width="3" height="2" /><rect x="7.500" y="14" width="3" height="2" /><rect x="12" y="14" width="3" height="2" /><rect x="3" y="18" width="3" height="2" /><rect x="7.500" y="18" width="3" height="2" /><rect x="12" y="18" width="3" height="2" /></g></svg>
      </Slot>
      <Slot h="h-[42px]">
        <svg width="20" height="18" viewBox="0 0 20 18"><path d="M0 1h7l2 2h11v15H0z" fill="#e6cf7a" /><rect x="0" y="5" width="20" height="13" fill="#ecd98c" /><path d="M5 18v-5a3 3 0 0 1 3-3h4a3 3 0 0 1 3 3v5h-3v-4H8v4z" fill="#3f9ed8" /></svg>
      </Slot>
      <Slot h="h-[48px]">
        <svg width="24" height="18" viewBox="0 0 24 18"><path d="M0 6 12 0l12 6v12H0z" fill="#fff" /><path d="M0 6l12 7 12-7-9 8H9z" fill="#222" opacity=".9" /><path d="M9 13 24 6v3L14 14z" fill="#20242f" /></svg>
      </Slot>
      <Slot h="h-[42px]"><Chrome /></Slot>
      <Slot h="h-[42px]">
        <div className="w-[24px] h-[23px] bg-[#f1e3e0] flex items-center justify-center text-[21px] font-bold leading-none text-[#a8282f] font-['Liberation_Sans',sans-serif]">A</div>
      </Slot>
      <Slot h="h-[46px]"><Chrome /></Slot>
      <Slot h="h-[43px]" cls="bg-[#3f4654]">
        <svg width="24" height="24" viewBox="0 0 24 24"><rect width="24" height="24" fill="#0a5c98" /><path d="M0 0h17L12 24H0z" fill="#f0f0f0" /><path d="M5 8h12l-2 7H2z" fill="#d4222a" /><rect x="9" y="17" width="15" height="6" fill="#14345c" /></svg>
      </Slot>
      <div className="h-[24px] shrink-0" />
      <div className="h-[15px] bg-[#f1f1f3] flex items-center shrink-0 justify-between px-[5px]">
        <svg width="6" height="9" viewBox="0 0 6 9" fill="none" stroke="#333" strokeWidth="1.700"><path d="M5 1 1 4.500 5 8" /></svg>
        <span className="w-[16px] h-[15px] bg-[#cfcfd4]" />
        <svg width="6" height="9" viewBox="0 0 6 9" fill="none" stroke="#333" strokeWidth="1.700"><path d="M1 1l4 3.500L1 8" /></svg>
      </div>
      <div className="h-[24px] shrink-0 flex items-center pl-[12px]"><svg width="8" height="13" viewBox="0 0 8 13" fill="none" stroke="#ccc"><path d="M7 .5 1 6.500l6 6" /></svg></div>
      <div className="h-[22px] shrink-0 flex items-center gap-[9px] pl-[9px]">
        <svg width="15" height="12" viewBox="0 0 15 12" fill="none" stroke="#ddd"><path d="M1 7h10v4H1zM3 7l3-5h7l-2 5" /></svg>
        <svg width="12" height="12" viewBox="0 0 12 12" fill="none" stroke="#ddd"><path d="M1 11a10 10 0 0 1 10-10M4 11a7 7 0 0 1 7-7M7 11a4 4 0 0 1 4-4" /></svg>
      </div>
      <div className="h-[22px] shrink-0 flex items-center pl-[9px]">
        <svg width="14" height="12" viewBox="0 0 14 12" fill="none" stroke="#ddd"><path d="M1 4h2l3-3v10L3 8H1zM8.500 3.500a3.500 3.500 0 0 1 0 5M10.500 1.500a6 6 0 0 1 0 9" /></svg>
      </div>
      <div className="mt-[11px] text-[10.800px] leading-[16px] text-center text-white whitespace-nowrap">
        <div>11:49 AM</div>
        <div>22-Jun-19</div>
      </div>
      <div className="mt-[17px] flex justify-center">
        <svg width="15" height="15" viewBox="0 0 15 15"><path d="M0 0h15v11H9.500L7.500 14l-2-3H0z" fill="#fff" /><path d="M3 3.500h9M3 6h9M3 8.500h6" stroke="#223" /></svg>
      </div>
    </div>
  );
}

function Noise() {
  const cols = ["#7a3f7f", "#2e8b57", "#c2527a", "#3f6fc0", "#d8c85a", "#151515", "#1a1a1a", "#9a9a9a", "#4ab0a0", "#b04030"];
  const cells: React.ReactNode[] = [];
  for (let y = 0; y < 360; y++) {
    for (let x = 0; x < 3; x++) {
      const n = (x * 7 + y * 13 + ((x * y * 31) % 17) + ((y * y) % 23)) % cols.length;
      cells.push(<rect key={`${x}-${y}`} x={x * 2} y={y * 2} width="2" height="2" fill={cols[n]} />);
    }
  }
  return <svg width="6" height="720" viewBox="0 0 6 720" className="shrink-0">{cells}</svg>;
}

export default function App() {
  return (
    <div className="w-[1280px] h-[720px] overflow-hidden flex font-['Noto_Sans','Open_Sans',sans-serif] bg-white">
      <div className="w-[1222px] shrink-0 flex flex-col">
        <div className="flex h-[125px] shrink-0">
          <div className="w-[30px] shrink-0 bg-[#0a5c98] flex flex-col">
            <Logo />
            <div className="mt-[43px] flex flex-col gap-[3px] items-center">
              <span className="w-[9px] h-px bg-[#cfe0ee]" />
              <span className="w-[9px] h-px bg-[#cfe0ee]" />
              <span className="w-[9px] h-px bg-[#cfe0ee]" />
            </div>
          </div>
          <div className="flex-1 min-w-0">
            <TitleBar />
            <Tabs />
            <Ribbon />
          </div>
        </div>
        <div className="flex h-[521px] shrink-0">
          <Viewport />
          <Panel />
          <SideIcons />
        </div>
        <Toolbar />
        <Status />
      </div>
      <Taskbar />
      <Noise />
    </div>
  );
}
